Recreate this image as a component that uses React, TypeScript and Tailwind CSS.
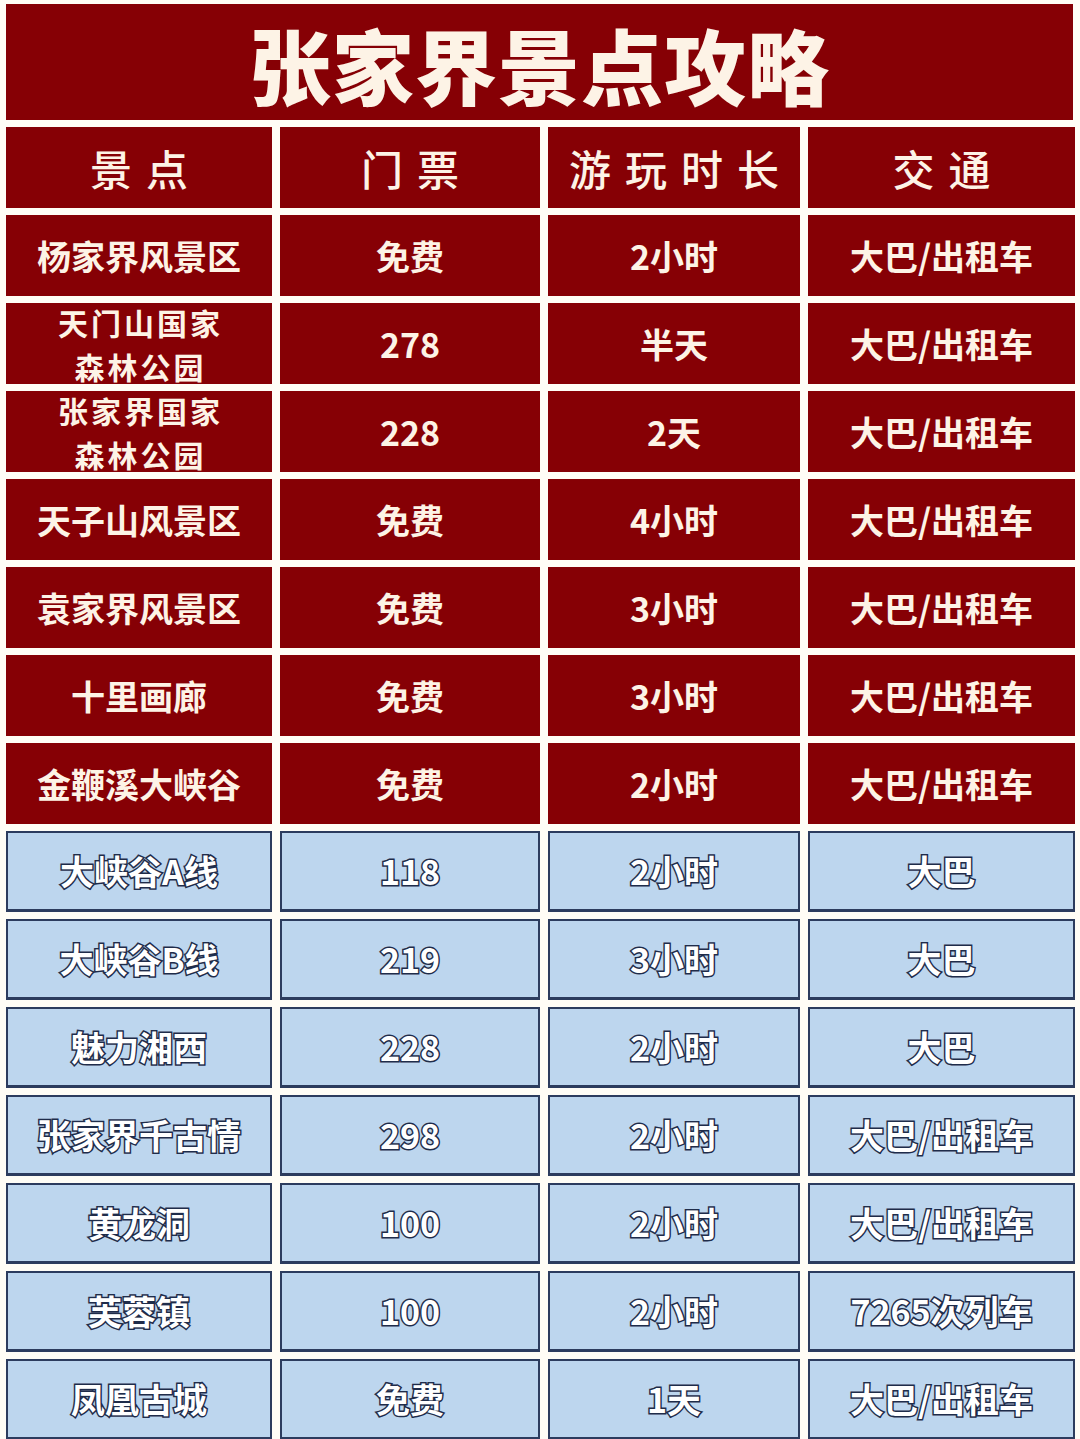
import React from 'react';

type Row = [string, string, string, string];

const redRows: Row[] = [
  ['杨家界风景区', '免费', '2小时', '大巴/出租车'],
  ['天门山国家\n森林公园', '278', '半天', '大巴/出租车'],
  ['张家界国家\n森林公园', '228', '2天', '大巴/出租车'],
  ['天子山风景区', '免费', '4小时', '大巴/出租车'],
  ['袁家界风景区', '免费', '3小时', '大巴/出租车'],
  ['十里画廊', '免费', '3小时', '大巴/出租车'],
  ['金鞭溪大峡谷', '免费', '2小时', '大巴/出租车'],
];

const blueRows: Row[] = [
  ['大峡谷A线', '118', '2小时', '大巴'],
  ['大峡谷B线', '219', '3小时', '大巴'],
  ['魅力湘西', '228', '2小时', '大巴'],
  ['张家界千古情', '298', '2小时', '大巴/出租车'],
  ['黄龙洞', '100', '2小时', '大巴/出租车'],
  ['芙蓉镇', '100', '2小时', '7265次列车'],
  ['凤凰古城', '免费', '1天', '大巴/出租车'],
];

const headers = ['景点', '门票', '游玩时长', '交通'];

const cellText = (text: string) => {
  const [a, b] = text.split('\n');
  if (!b) return <span>{a}</span>;
  // two-line names: slightly smaller so the lines fit in one row
  return (
    <span className="text-[30px] leading-[44px] tracking-[3px] pl-[3px]">
      {a}
      <br />
      {b}
    </span>
  );
};

export default function App() {
  return (
    <div
      className="w-[1080px] h-[1439px] bg-[#fffdf6] pt-[4px] pl-[6px] overflow-hidden"
      style={{ fontFamily: '"Noto Sans CJK SC", "Noto Sans", sans-serif' }}
    >
      <div className="w-[1067px] h-[116px] bg-[#860005] flex items-center justify-center">
        <h1 className="text-[82px] font-black text-[#fdf3e6] tracking-[1px] leading-none pt-[4px]">
          张家界景点攻略
        </h1>
      </div>

      <div className="mt-[7px] grid grid-cols-[266px_260px_252px_267px] gap-x-[8px] gap-y-[7px] auto-rows-[81px]">
        {headers.map((h) => (
          <div key={h} className="bg-[#860005] flex items-center justify-center">
            <span className="text-[42px] font-medium text-[#fdf3e6] tracking-[14px] pl-[14px] leading-none">
              {h}
            </span>
          </div>
        ))}

        {redRows.map((row, r) =>
          row.map((cell, c) => (
            <div
              key={`r${r}-${c}`}
              className="bg-[#860005] flex items-center justify-center text-center text-[#fdf3e6] font-bold text-[34px] leading-[40px]"
            >
              {cellText(cell)}
            </div>
          ))
        )}

        {blueRows.map((row, r) =>
          row.map((cell, c) => (
            <div
              key={`b${r}-${c}`}
              className="bg-[#bdd6ee] border-2 border-[#2c3c5e] border-b-[3px] flex items-center justify-center text-center"
            >
              <span className="text-white font-bold text-[34px] leading-none [-webkit-text-stroke:3px_#1f2c4a] [paint-order:stroke_fill]">
                {cell}
              </span>
            </div>
          ))
        )}
      </div>
    </div>
  );
}
